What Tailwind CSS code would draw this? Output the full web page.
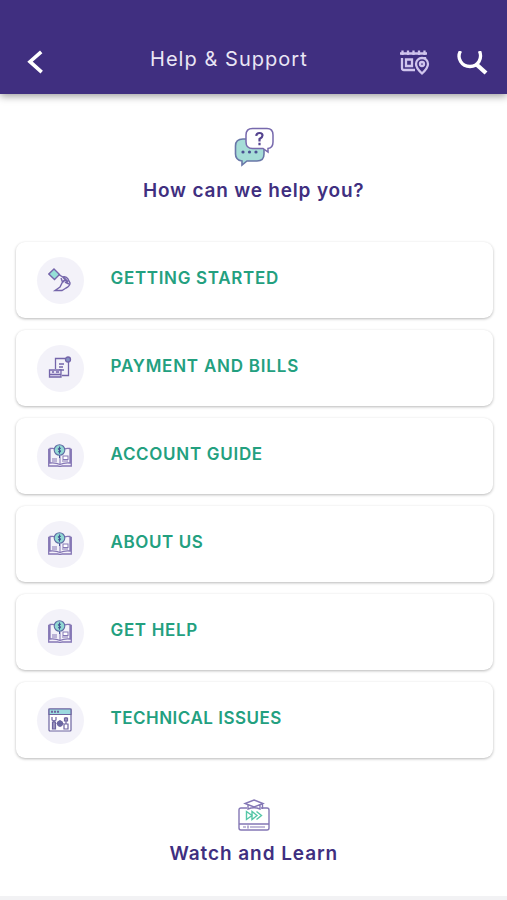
<!DOCTYPE html>
<html lang="en">
<head>
<meta charset="utf-8">
<title>Help &amp; Support</title>
<script src="https://cdn.jsdelivr.net/npm/@tailwindcss/browser@4"></script>
</head>
<body class="bg-white font-['Inter',sans-serif]">
<svg class="hidden">
  <symbol id="book" viewBox="0 0 24 24">
    <path d="M2 5.500H.7V22H9.800Q12 22 12 23Q12 22 14.200 22H23.300V5.500H22M2 19V4.500Q8 3.500 12 7Q16 3.500 22 4.500V19Q16 18.500 12 20.500Q8 18.500 2 19Z" fill="#f4f1fa" stroke="#8577b5" stroke-width="1.300"/>
    <path d="M12 12V20M4 15H9M4 17H9M14 17H20" stroke="#8577b5"/>
    <rect x="15" y="12" width="5" height="3.500" fill="#fff" stroke="#8577b5"/>
    <circle cx="11.500" cy="6" r="5.300" fill="#91d8d3" stroke="#5e6ba4" stroke-width="1.100"/>
    <path d="M13 4.500Q11.500 3.300 10.300 4.500Q10 6 11.500 6Q13.200 6.500 12.500 7.800Q11.500 8.500 10 7.500M11.500 2.500V9.700M11.500 11.300V14" fill="none" stroke="#425493" stroke-width="1"/>
  </symbol>
</svg>
<div class="flex h-[900px] w-[507px] flex-col overflow-hidden">
  <header class="relative flex h-[94px] shrink-0 items-start bg-[#402f80] shadow-[0_2px_8px_rgba(0,0,0,0.4)]">
    <svg class="ml-[25px] mt-[48px] h-7 w-5" viewBox="0 0 20 28" fill="none" stroke="#fff" stroke-width="3.600"><path d="M16.200 3.800L5 13.700L16.700 24.200"/></svg>
    <h1 class="ml-[105px] mt-[45px] w-[200px] whitespace-nowrap text-[20px] font-normal leading-7 tracking-[1.04px] text-[#eae6f5]">Help &amp; Support</h1>
    <svg class="ml-[48px] mt-[48px] h-7 w-8" viewBox="0 0 32 28" fill="none" stroke="#d0c5ed" stroke-width="2.300">
      <path d="M2 5.500H29" stroke-width="2.500"/><path d="M4.500 2.500V7M10 2.500V7M15.500 2.500V7M21 2.500V7M26.500 2.500V7"/>
      <path d="M4 10V20Q4 22 6 22H17M27 9V11M8 11.500H14V18H8Z"/>
      <path d="M24 25.500Q18 20 18 16A6 6 0 0 1 30 16Q30 20 24 25.500Z"/><circle cx="24" cy="16" r="2"/>
    </svg>
    <svg class="ml-[26px] mt-[51px] h-6 w-8" viewBox="0 0 32 24" fill="none" stroke="#fff"><path d="M4.500 0C.5 7 5.500 15.500 14 15.500C22.500 15.500 26.500 7 23.500 0" stroke-width="3.300"/><path d="M20.500 13.500L30 22" stroke-width="4.300"/></svg>
  </header>
  <main class="flex grow flex-col items-center">
    <svg class="mt-[32px] h-[42px] w-[42px] shrink-0" viewBox="0 0 42 42">
      <path d="M10 14H24Q31 14 31 20V29Q31 36 24 36H14L9 40V36Q2.500 35 2.500 29V21Q2.500 14 10 14Z" transform="translate(0 -1)" fill="#a5ddd7" stroke="#6977a8" stroke-width="1.600"/>
      <g fill="#4a5192"><circle cx="10" cy="26" r="1.600"/><circle cx="16.500" cy="26" r="1.600"/><circle cx="23" cy="26" r="1.600"/></g>
      <path d="M19.500 2.500H34Q40 2.500 40 9V16Q40 22 35 22.500V26L30 22.500H19.500Q13 22.500 13 16V9Q13 2.500 19.500 2.500Z" fill="#fff" stroke="#7769ad" stroke-width="1.500"/>
      <path d="M23.200 9.800Q23.500 7 26.500 7Q29.500 7 29.500 9.500Q29.500 11.200 26.500 13V15.500M26.500 16.800V19.200" fill="none" stroke="#54438f" stroke-width="2.200"/>
    </svg>
    <h2 class="mt-[9px] w-[221px] shrink-0 whitespace-nowrap text-[19px] font-semibold leading-7 tracking-[0.81px] text-[#402f80]">How can we help you?</h2>
    <ul class="ml-px mt-[37px] flex w-[477px] flex-col gap-[12px] text-[17px] font-semibold text-[#23a07f] [&>li]:flex [&>li]:h-[76px] [&>li]:items-center [&>li]:rounded-[9px] [&>li]:bg-white [&>li]:pl-[21px] [&>li]:shadow-[0_1px_3px_rgba(0,0,0,0.28)] [&_i]:flex [&_i]:size-[47px] [&_i]:items-center [&_i]:justify-center [&_i]:rounded-full [&_i]:bg-[#f3f2f9] [&_span]:ml-[27px] [&_span]:-mt-[3px] [&_span]:whitespace-nowrap [&_svg]:size-6">
      <li><i><svg viewBox="0 0 24 24" fill="none" stroke="#7465aa" stroke-width="1.400"><path d="M6 1L11.500 6.500L6.500 11.500L.8 6Z" fill="#95e0d7"/><path d="M10.500 6.500L15 9Q18 8 20 11L22 15Q22 18 18 20L14 22.500H7L12 19L14.500 14L13 10"/><path d="M15 9L20 14M17 14L21 16M14.500 14L17 12" stroke-width="1.800"/></svg></i><span class="tracking-[0.68px]">GETTING STARTED</span></li>
      <li><i><svg viewBox="0 0 24 24" fill="none" stroke="#7465aa" stroke-width="1.300"><path d="M7.500 13V2.500H18M20.500 6V19.500H14M11 8H16M11 11H15M11 14H16"/><circle cx="20" cy="3.500" r="2.500" fill="#8391c2"/><path d="M1.500 14H13V21H1.500ZM1.500 18.500H13M4 16H6M8 16H11" fill="#e6e2f3"/></svg></i><span class="tracking-[0.78px]">PAYMENT AND BILLS</span></li>
      <li><i><svg><use href="#book"/></svg></i><span class="tracking-[0.7px]">ACCOUNT GUIDE</span></li>
      <li><i><svg><use href="#book"/></svg></i><span class="tracking-[0.6px]">ABOUT US</span></li>
      <li><i><svg><use href="#book"/></svg></i><span class="tracking-[0.65px]">GET HELP</span></li>
      <li><i><svg viewBox="0 0 24 24" fill="none" stroke="#6d649f" stroke-width="1.200"><rect x="1" y="1" width="22" height="22" rx="1" fill="#fff"/><path d="M1 1H23V6.500H1Z" fill="#9bd9de"/><path d="M3 3.700H11" stroke-width="2" stroke-dasharray="2 1"/><path d="M4 9V12L6 13L8 12V9M6 13V21M4.500 21V14H7.500V21ZM18 9V16M16.500 13V10H19.500V13ZM16 16H20V21H16Z"/><circle cx="12" cy="15.500" r="2.500" fill="#6579a7"/><path d="M12 12V19M8.500 15.500H15.500"/></svg></i><span class="tracking-[0.5px]">TECHNICAL ISSUES</span></li>
    </ul>
    <svg class="mt-[41px] h-[32px] w-[32px] shrink-0" viewBox="0 0 32 32" fill="none" stroke="#8477b5" stroke-width="1.400">
      <path d="M9 9H3Q1 9 1 11V29Q1 31 3 31H29Q31 31 31 29V11Q31 9 29 9H23M1 25H31"/>
      <path d="M16 1L25 4.500L16 8L7 4.500ZM10 6V10Q16 7.500 22 10V6M24.500 5V10"/>
      <path d="M5 28H8M10 26.500V29.500M12 28H27" stroke-width="1.200"/>
      <path d="M8.500 12.500V20.500L14 16.500ZM14 12.500V20.500L19 16.500ZM18.500 12.500L23.500 16.500L18.500 20.500" stroke="#55c7a7"/>
    </svg>
    <h2 class="mt-[9px] w-[168px] shrink-0 whitespace-nowrap text-[19px] font-semibold leading-7 tracking-[0.92px] text-[#402f80]">Watch and Learn</h2>
  </main>
  <div class="h-1 shrink-0 bg-[#f2f2f4]"></div>
</div>
</body>
</html>
